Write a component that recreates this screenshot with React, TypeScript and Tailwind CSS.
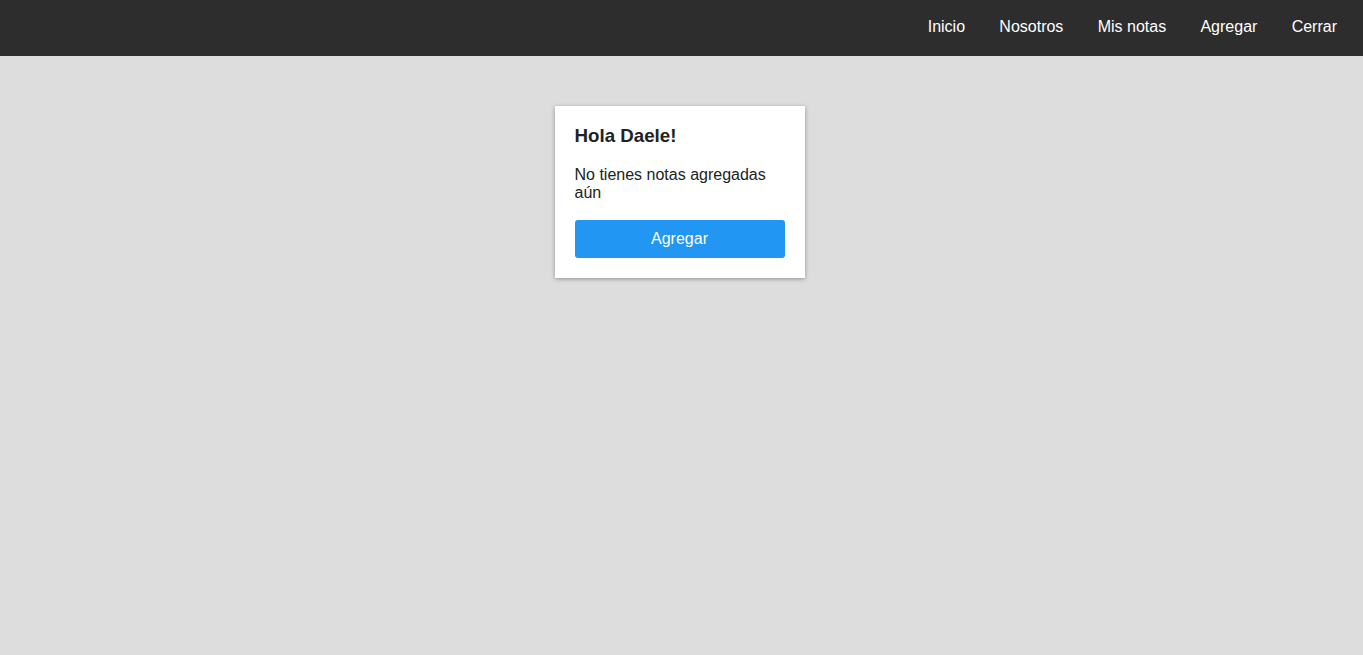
import React from 'react';

const links = ['Inicio', 'Nosotros', 'Mis notas', 'Agregar', 'Cerrar'];

export default function App() {
  return (
    <div className="min-h-screen bg-[#dddddd] font-['Liberation_Sans',Arial,sans-serif]">
      {/* Navbar */}
      <nav className="h-14 bg-[#2d2d2d] flex items-center justify-end pr-[26px] pb-[2px]">
        <ul className="flex gap-[34.3px]">
          {links.map((l) => (
            <li key={l}>
              <a href="#" className="text-white text-base leading-[18px]">
                {l}
              </a>
            </li>
          ))}
        </ul>
      </nav>

      {/* Content */}
      <main className="flex justify-center pt-[50px] pr-1">
        <div className="w-[250px] bg-white px-5 pt-[19px] pb-5 shadow-[0_1px_4px_rgba(0,0,0,0.35)] text-[#222]">
          <h3 className="text-[18.72px] font-bold leading-[21.5px] mb-[19px]">Hola Daele!</h3>
          <p className="text-base leading-[18.4px] mb-[18px]">No tienes notas agregadas aún</p>
          <button className="w-full bg-[#2196f3] text-white text-base leading-[18px] py-2.5 rounded-[3px]">
            Agregar
          </button>
        </div>
      </main>
    </div>
  );
}
